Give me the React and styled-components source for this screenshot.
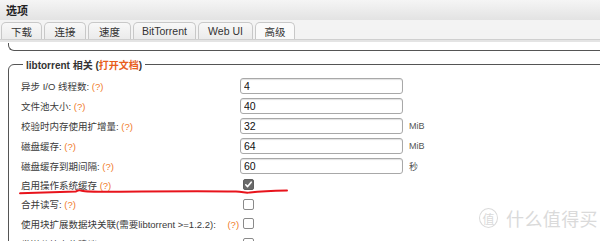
import styled, { createGlobalStyle } from 'styled-components';

const GlobalStyle = createGlobalStyle`
    html, body {
        margin: 0;
        padding: 0;
        background: #ffffff;
        overflow: hidden;
    }
    body {
        font-family: "Liberation Sans", "Noto Sans CJK SC", sans-serif;
        color: #333;
    }
`;

const tabs = [
    { name: '下载', width: 41 },
    { name: '连接', width: 42 },
    { name: '速度', width: 43 },
    { name: 'BitTorrent', width: 63 },
    { name: 'Web UI', width: 55 },
    { name: '高级', width: 40 },
];

const inputRows = [
    { label: '异步 I/O 线程数:', value: '4' },
    { label: '文件池大小:', value: '40' },
    { label: '校验时内存使用扩增量:', value: '32', unit: 'MiB' },
    { label: '磁盘缓存:', value: '64', unit: 'MiB' },
    { label: '磁盘缓存到期间隔:', value: '60', unit: '秒' },
];

const checkRows = [
    { label: '启用操作系统缓存', checked: true },
    { label: '合并读写:', checked: false },
    { label: '使用块扩展数据块关联(需要libtorrent >=1.2.2):', checked: false, wide: true },
    { label: '发送分块上传建议:', checked: false },
];

const App = () => {
    return (
        <Page>
            <GlobalStyle />
            <TitleBar>选项</TitleBar>
            <TabStrip>
                {tabs.map(t => (
                    <Tab key={t.name} width={t.width} active={t.name === '高级'}>{t.name}</Tab>
                ))}
            </TabStrip>
            <Content>
                <PrevTail />
                <Fieldset>
                    <Legend>libtorrent 相关 (<DocLink>打开文档</DocLink>)</Legend>
                    {inputRows.map(r => (
                        <Row key={r.label}>
                            <Label>{r.label} <Help>(?)</Help></Label>
                            <TextInput defaultValue={r.value} />
                            <Unit>{r.unit}</Unit>
                        </Row>
                    ))}
                    <CheckList>
                        {checkRows.map(r => (
                            <CheckRow key={r.label}>
                                <Label>{r.label} <Help gap={r.wide ? 9 : 0}>(?)</Help></Label>
                                <Box checked={r.checked}>
                                    {r.checked && (
                                        <svg width="9" height="9" viewBox="0 0 9 9">
                                            <path d="M1.8 4.8 L3.6 6.6 L7.2 2.2" fill="none" stroke="#fff" strokeWidth="1.6" strokeLinecap="round" strokeLinejoin="round" />
                                        </svg>
                                    )}
                                </Box>
                            </CheckRow>
                        ))}
                    </CheckList>
                </Fieldset>
            </Content>
            <Scribble width="600" height="241" viewBox="0 0 600 241">
                <path d="M20 193.2 C40 192.6 60 192 76 191.4 C78 190.2 80 189.6 82 190.8 C86 192 96 192 120 191.8 C160 191.4 200 191 236 191.6 C244 192 246 193.4 250 192.4 C262 191 276 190.6 287 190.4" fill="none" stroke="#e8141c" strokeWidth="2" strokeLinecap="round" />
            </Scribble>
            <Watermark>
                <Seal>值</Seal>
                <Brand>什么值得买</Brand>
            </Watermark>
        </Page>
    );
};

const Page = styled.div`
    position: relative;
    width: 600px;
    height: 241px;
    overflow: hidden;
`;

const TitleBar = styled.div`
    height: 20px;
    box-sizing: border-box;
    padding-left: 6px;
    display: flex;
    align-items: center;
    font-size: 11px;
    font-weight: bold;
    color: #222;
    background: linear-gradient(#f5f5f5, #e3e3e3);
`;

const TabStrip = styled.div`
    height: 20px;
    box-sizing: border-box;
    display: flex;
    align-items: flex-end;
    gap: 2px;
    padding-left: 1px;
    background: #f3f3f3;
    border-bottom: 1px solid #cfcfcf;
    box-shadow: 0 2px 0 #e4e4e4;
`;

const Tab = styled.div`
    width: ${props => props.width}px;
    height: 17px;
    box-sizing: border-box;
    display: flex;
    align-items: center;
    justify-content: center;
    font-size: 10.5px;
    color: #333;
    border: 1px solid #c8c8c8;
    border-bottom: none;
    border-radius: 5px 5px 0 0;
    background: ${props => props.active ? '#fafafa' : 'linear-gradient(#f8f8f8, #ebebeb)'};
`;

const Content = styled.div`
    padding-top: 3px;
`;

const PrevTail = styled.div`
    height: 7px;
    margin-left: 8px;
    border-left: 1px solid #555;
    border-bottom: 1.5px solid #555;
    border-bottom-left-radius: 6px;
`;

const Fieldset = styled.fieldset`
    margin: 6px -20px 0 8px;
    padding: 4px 0 0 12px;
    border: 1px solid #555;
    border-radius: 6px;
`;

const Legend = styled.legend`
    padding: 0 3px;
    margin-left: 2px;
    font-size: 10px;
    font-weight: bold;
    color: #333;
`;

const DocLink = styled.span`
    color: #e8601c;
`;

const Row = styled.div`
    display: grid;
    grid-template-columns: 219px 163px auto;
    align-items: center;
    height: 20px;
`;

const CheckList = styled.div`
    margin-top: -1px;
`;

const CheckRow = styled(Row)`
    height: 19.6px;
`;

const Label = styled.span`
    font-size: 9.5px;
    color: #3a3a3a;
    white-space: nowrap;
`;

const Help = styled.span`
    color: #f07a2a;
    margin-left: ${props => props.gap || 0}px;
`;

const TextInput = styled.input`
    box-sizing: border-box;
    width: 163px;
    height: 16px;
    margin: 0;
    padding: 0 3px;
    font-family: "Liberation Sans", sans-serif;
    font-size: 10.5px;
    color: #111;
    border: 1px solid #a8a8a8;
    border-radius: 3px;
    box-shadow: inset 0 1px 1px rgba(0, 0, 0, 0.12);
    outline: none;
`;

const Unit = styled.span`
    margin-left: 6px;
    font-size: 9px;
    color: #555;
`;

const Box = styled.span`
    box-sizing: border-box;
    width: 11px;
    height: 11px;
    margin-left: 3px;
    display: flex;
    align-items: center;
    justify-content: center;
    border-radius: 2px;
    border: 1px solid ${props => props.checked ? '#5f5f5f' : '#8a8a8a'};
    background: ${props => props.checked ? '#6a6a6a' : '#fff'};
`;

const Scribble = styled.svg`
    position: absolute;
    left: 0;
    top: 0;
    pointer-events: none;
`;

const Watermark = styled.div`
    position: absolute;
    left: 479px;
    top: 205px;
    display: flex;
    align-items: center;
    gap: 8px;
    color: #dadada;
    pointer-events: none;
`;

const Seal = styled.span`
    box-sizing: border-box;
    width: 19px;
    height: 20px;
    display: flex;
    align-items: center;
    justify-content: center;
    border: 1.5px solid #dadada;
    border-radius: 50%;
    font-size: 12px;
`;

const Brand = styled.span`
    font-size: 18px;
    letter-spacing: 0.4px;
`;

export default App;
